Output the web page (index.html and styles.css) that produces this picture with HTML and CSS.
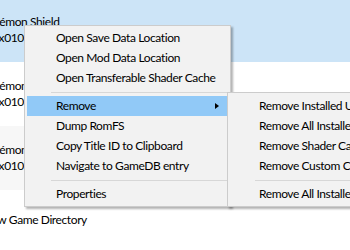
FILE: index.html
```html
<!DOCTYPE html>
<html lang="en">
<head>
  <meta charset="UTF-8">
  <title>Game List</title>
  <link rel="stylesheet" href="styles.css">
</head>
<body>
  <div class="game-list">
    <div class="row selected">
      <span class="name">Pokémon Shield</span>
      <span class="title-id">0x0100ABF008968000</span>
    </div>
    <div class="row">
      <span class="name">Pokémon Sword</span>
      <span class="title-id">0x0100ABF008968000</span>
    </div>
    <div class="row alt">
      <span class="name">Pokémon Legends</span>
      <span class="title-id">0x01001F5010DFA000</span>
    </div>
    <div class="row add-dir">
      <span class="name">Add New Game Directory</span>
    </div>
  </div>

  <div class="menu main-menu">
    <div class="item">Open Save Data Location</div>
    <div class="item">Open Mod Data Location</div>
    <div class="item">Open Transferable Shader Cache</div>
    <div class="sep"></div>
    <div class="item active has-sub">Remove<span class="arrow"></span></div>
    <div class="item">Dump RomFS</div>
    <div class="item">Copy Title ID to Clipboard</div>
    <div class="item">Navigate to GameDB entry</div>
    <div class="sep"></div>
    <div class="item">Properties</div>
  </div>

  <div class="menu sub-menu">
    <div class="item">Remove Installed Update</div>
    <div class="item">Remove All Installed DLC</div>
    <div class="item">Remove Shader Cache</div>
    <div class="item">Remove Custom Configuration</div>
    <div class="sep"></div>
    <div class="item">Remove All Installed Contents</div>
  </div>
</body>
</html>
```

FILE: styles.css
```css
:root {
  --sel-row: #cce4f7;
  --alt-row: #f7f7f7;
  --menu-bg: #f2f2f2;
  --menu-border: #cccccc;
  --menu-hover: #91c9f7;
  --sep: #d7d7d7;
}

html, body {
  margin: 0;
  padding: 0;
  width: 350px;
  height: 250px;
  overflow: hidden;
  background: #ffffff;
  font-family: Lato, 'Noto Sans', sans-serif;
  font-size: 12px;
  letter-spacing: -0.4px;
  color: #000000;
}

.game-list {
  display: flex;
  flex-direction: column;
  margin-top: -2px;
}

.row {
  height: 64px;
  display: flex;
  flex-direction: column;
  justify-content: center;
  line-height: 16px;
  white-space: nowrap;
}

.row.selected {
  background: var(--sel-row);
}

.row.alt {
  background: var(--alt-row);
}

.row.add-dir {
  height: 60px;
}

.name {
  margin-left: -19px;
}

.title-id {
  margin-left: -8px;
}

.add-dir .name {
  margin-left: -40px;
}

.menu {
  position: absolute;
  background: var(--menu-bg);
  border: 1px solid var(--menu-border);
  box-shadow: 2px 2px 2px rgba(0, 0, 0, 0.3);
  white-space: nowrap;
}

.main-menu {
  left: 24px;
  top: 25px;
  width: 205px;
  padding: 2px 0;
}

.sub-menu {
  left: 227px;
  top: 92px;
  width: 190px;
  padding: 3px 0 2px;
}

.item {
  height: 20px;
  line-height: 20px;
  padding-left: 29px;
  margin: 0 2px;
  position: relative;
}

.item.active {
  background: var(--menu-hover);
}

.arrow {
  position: absolute;
  right: 9px;
  top: 7px;
  width: 0;
  height: 0;
  border-top: 3.5px solid transparent;
  border-bottom: 3.5px solid transparent;
  border-left: 4px solid #000000;
}

.sep {
  height: 8px;
  display: flex;
  align-items: center;
  margin-left: 26px;
  margin-right: 2px;
}

.sep::before {
  content: '';
  flex: 1;
  border-top: 1px solid var(--sep);
}

.sub-menu .sep {
  margin-left: 27px;
}
```
